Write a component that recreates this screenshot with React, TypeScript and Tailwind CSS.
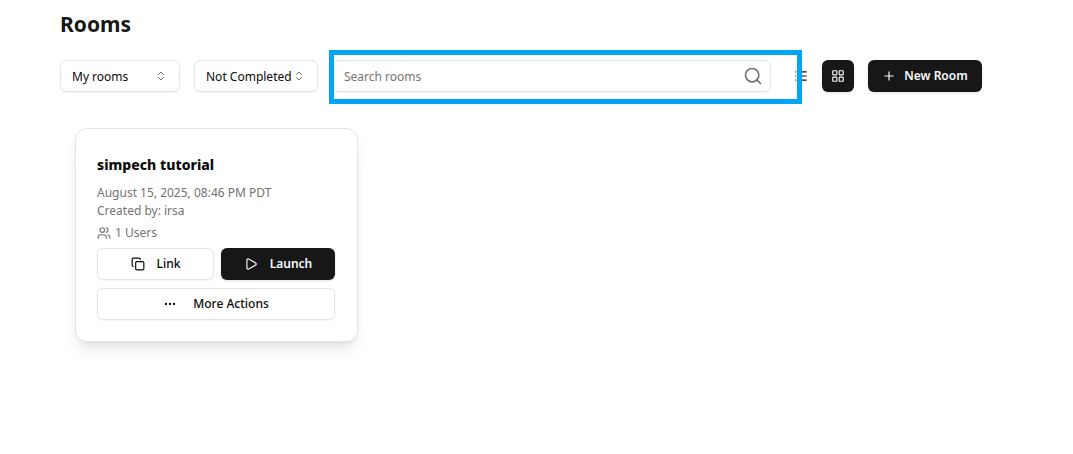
import { ChevronsUpDown, Copy, Ellipsis, LayoutGrid, List, Play, Plus, Search, Users } from 'lucide-react';
import clsx from 'clsx';
import type { ButtonHTMLAttributes } from 'react';

type Room = {
  id: string;
  name: string;
  createdAt: string;
  createdBy: string;
  users: number;
};

const rooms: Room[] = [
  {
    id: 'simpech-tutorial',
    name: 'simpech tutorial',
    createdAt: 'August 15, 2025, 08:46 PM PDT',
    createdBy: 'irsa',
    users: 1,
  },
];

type ButtonProps = ButtonHTMLAttributes<HTMLButtonElement> & {
  variant?: 'default' | 'outline' | 'ghost';
};

function Button({ variant = 'default', className, ...props }: ButtonProps) {
  return (
    <button
      type="button"
      className={clsx(
        'flex h-8 items-center justify-center rounded-md text-xs whitespace-nowrap',
        variant === 'default' && 'bg-neutral-900 font-semibold text-neutral-50 shadow-sm',
        variant === 'outline' && 'border border-neutral-200 bg-white font-medium text-neutral-950 shadow-xs',
        variant === 'ghost' && 'text-neutral-950',
        className
      )}
      {...props}
    />
  );
}

function FilterSelect({ label, options, className }: { label: string; options: string[]; className: string }) {
  return (
    <div className={clsx('relative shrink-0', className)}>
      <select
        aria-label={label}
        className="h-8 w-full appearance-none rounded-md border border-neutral-200 bg-white pt-0.5 pl-[11px] text-xs text-neutral-950 shadow-xs"
      >
        {options.map((option) => (
          <option key={option}>{option}</option>
        ))}
      </select>
      <ChevronsUpDown className="pointer-events-none absolute top-2.5 right-[13px] size-3 text-neutral-500" />
    </div>
  );
}

function RoomCard({ room }: { room: Room }) {
  return (
    <article className="w-[283px] rounded-xl border border-neutral-200 bg-white pt-6 pr-[22px] pb-[21px] pl-[21px] shadow-lg">
      <h2 className="text-sm leading-6 font-extrabold text-neutral-950">{room.name}</h2>
      <div className="mt-[7px] text-xs leading-[18px] text-neutral-500">
        <p>{room.createdAt}</p>
        <p>Created by: {room.createdBy}</p>
        <p className="mt-1 flex items-center gap-1">
          <Users className="size-3.5" />
          {room.users} Users
        </p>
      </div>
      <div className="mt-1.5 flex gap-[7px]">
        <Button variant="outline" className="w-[117px] gap-3">
          <Copy className="size-3.5" />
          Link
        </Button>
        <Button className="flex-1 gap-3">
          <Play className="size-3.5" />
          Launch
        </Button>
      </div>
      <Button variant="outline" className="mt-2 w-full gap-4">
        <Ellipsis className="size-3.5" />
        More Actions
      </Button>
    </article>
  );
}

export default function App() {
  return (
    <main className="min-h-screen bg-white pt-2 pr-[91px] pl-[60px] font-['Noto_Sans','Open_Sans',sans-serif]">
      <h1 className="text-[21px] leading-8 font-bold text-neutral-900">Rooms</h1>

      {/* Toolbar */}
      <div className="mt-5 flex items-center gap-3.5">
        <FilterSelect label="Room owner" options={['My rooms', 'All rooms']} className="w-[120px]" />
        <FilterSelect label="Status" options={['Not Completed', 'Completed']} className="w-[124px]" />
        <div className="relative min-w-0 flex-1">
          <input
            type="search"
            aria-label="Search rooms"
            placeholder="Search rooms"
            className="h-8 w-full rounded-md border border-neutral-200 bg-white pr-9 pl-[11px] text-xs text-neutral-950 shadow-xs placeholder:text-neutral-500"
          />
          <Search className="pointer-events-none absolute top-1.5 right-2 size-5 text-neutral-500" />
          {/* Highlight frame around the search field */}
          <div className="pointer-events-none absolute -top-2.5 -right-[31px] -bottom-3 -left-[3px] z-10 border-5 border-[#00a6f4]" />
        </div>
        <div className="flex gap-[5px]">
          <Button variant="ghost" aria-label="List view" className="w-8">
            <List className="size-3.5" />
          </Button>
          <Button aria-label="Grid view" className="w-8">
            <LayoutGrid className="size-3.5" />
          </Button>
        </div>
        <Button className="w-[114px] gap-2">
          <Plus className="size-3.5" />
          New Room
        </Button>
      </div>

      {/* Room list */}
      <section aria-label="Room list" className="mt-9 flex flex-wrap gap-4 pl-[15px]">
        {rooms.map((room) => (
          <RoomCard key={room.id} room={room} />
        ))}
      </section>
    </main>
  );
}
